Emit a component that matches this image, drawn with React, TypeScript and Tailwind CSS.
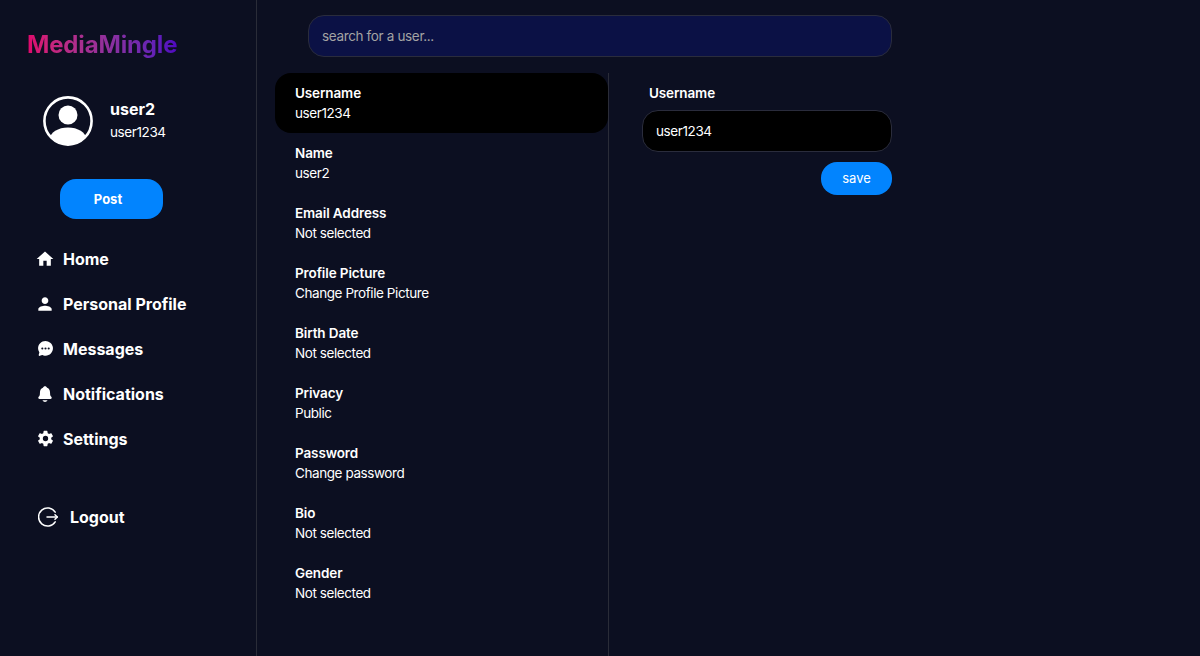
import { IoChatbubbleEllipses, IoNotifications, IoSettingsSharp } from "react-icons/io5";
import { MdHome, MdPerson } from "react-icons/md";

const nav = [
  { label: "Home", icon: <MdHome className="w-[20px] h-[20px]" /> },
  { label: "Personal Profile", icon: <MdPerson className="w-[20px] h-[20px]" /> },
  { label: "Messages", icon: <IoChatbubbleEllipses className="w-[17px] h-[17px]" /> },
  { label: "Notifications", icon: <IoNotifications className="w-[18px] h-[18px]" /> },
  { label: "Settings", icon: <IoSettingsSharp className="w-[17px] h-[17px]" /> },
];

const rows = [
  ["Username", "user1234"],
  ["Name", "user2"],
  ["Email Address", "Not selected"],
  ["Profile Picture", "Change Profile Picture"],
  ["Birth Date", "Not selected"],
  ["Privacy", "Public"],
  ["Password", "Change password"],
  ["Bio", "Not selected"],
  ["Gender", "Not selected"],
];

function Avatar() {
  return (
    <svg viewBox="0 0 50 50" className="w-[50px] h-[50px] shrink-0">
      <defs>
        <clipPath id="avatar-clip">
          <circle cx="25" cy="25" r="24" />
        </clipPath>
      </defs>
      <circle cx="25" cy="25" r="23.6" fill="none" stroke="#fff" strokeWidth="2.6" />
      <circle cx="25" cy="19" r="9.5" fill="#fff" />
      <ellipse cx="25" cy="43" rx="18" ry="11.5" fill="#fff" clipPath="url(#avatar-clip)" />
    </svg>
  );
}

function LogoutIcon() {
  return (
    <svg viewBox="0 0 20 20" className="w-[20px] h-[20px] shrink-0" fill="none" stroke="#fff" strokeWidth="1.5" strokeLinecap="round" strokeLinejoin="round">
      <path d="M17.2 5.2A9 9 0 1 0 17.2 14.8" />
      <path d="M9 10H19.3" />
      <path d="M17 7.7L19.3 10L17 12.3" />
    </svg>
  );
}

export default function App() {
  return (
    <div className="flex w-[1200px] h-[656px] overflow-hidden bg-[#0c0f21] text-white font-['Inter',sans-serif]">
      <aside className="w-[257px] shrink-0 border-r border-[#2a2c38] flex flex-col pl-[27px] pt-[30px]">
        <div className="text-[24px] leading-[30px] font-bold tracking-[-0.15px] w-max bg-gradient-to-r from-[#e0046c] to-[#5006c0] bg-clip-text text-transparent">
          MediaMingle
        </div>
        <div className="flex items-center gap-[17px] ml-[16px] mt-[36px]">
          <Avatar />
          <div className="flex flex-col -mt-[3px]">
            <span className="text-[16px] leading-[24px] font-bold">user2</span>
            <span className="text-[13.5px] leading-[20px] tracking-[-0.4px] mt-[1px]">user1234</span>
          </div>
        </div>
        <button className="ml-[33px] mt-[33px] w-[103px] h-[40px] rounded-[16px] bg-[#0284fe] text-[13px] font-bold pr-[7px] pt-[1px]">
          Post
        </button>
        <nav className="mt-[17px] flex flex-col">
          {nav.map((n) => (
            <div key={n.label} className="h-[45px] flex items-center">
              <span className="w-[36px] pl-[8px] flex items-center">
                <span className="w-[20px] flex justify-center">{n.icon}</span>
              </span>
              <span className="text-[16px] font-bold">{n.label}</span>
            </div>
          ))}
        </nav>
        <div className="mt-[33px] ml-[11px] flex items-center gap-[12px] h-[45px]">
          <LogoutIcon />
          <span className="text-[16px] font-bold">Logout</span>
        </div>
      </aside>
      <main className="flex-1 flex flex-col">
        <div className="pl-[51px] pt-[15px]">
          <div className="w-[584px] h-[42px] rounded-[16px] border border-[#2a2c3c] bg-[#0b1145] flex items-center px-[13px] text-[13.5px] tracking-[-0.35px] text-[#a3a3a3]">
            search for a user...
          </div>
        </div>
        <div className="flex flex-1 mt-[16px] pl-[18px]">
          <div className="w-[334px] border-r border-[#2a2c38] flex flex-col">
            {rows.map(([a, b], i) => (
              <div
                key={a}
                className={
                  i === 0
                    ? "h-[60px] w-[333px] rounded-[16px] bg-black px-[20px] flex flex-col justify-center"
                    : "h-[60px] w-[333px] px-[20px] flex flex-col justify-center"
                }
              >
                <span className="text-[13.5px] leading-[20px] font-semibold tracking-[-0.12px]">{a}</span>
                <span className="text-[13.5px] leading-[20px] tracking-[-0.42px]">{b}</span>
              </div>
            ))}
          </div>
          <div className="w-[250px] ml-[33px] flex flex-col">
            <div className="pl-[7px] pt-[10px] text-[13.5px] leading-[20px] font-semibold tracking-[-0.12px]">Username</div>
            <div className="mt-[7px] h-[42px] rounded-[16px] border border-[#2a2c3c] bg-black flex items-center px-[13px] text-[13.5px] tracking-[-0.4px]">
              user1234
            </div>
            <div className="flex justify-end mt-[10px]">
              <button className="w-[71px] h-[33px] rounded-[16px] bg-[#0284fe] text-[13px] pt-[1px]">save</button>
            </div>
          </div>
        </div>
      </main>
    </div>
  );
}
